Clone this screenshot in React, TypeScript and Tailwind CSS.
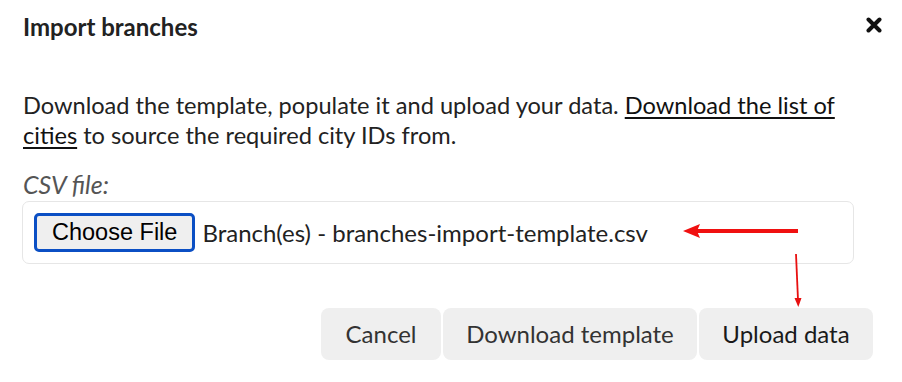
import React from 'react';

export default function App() {
  return (
    <div className="relative w-[902px] h-[382px] bg-white text-[#222] font-['Lato','Noto_Sans',sans-serif] pl-[23px] pr-[22px]">
      <div className="flex items-start justify-between pt-[12px]">
        <h1 className="text-[24px] leading-[30px] font-bold">Import branches</h1>
        <button className="mt-[5px] -mr-[2px] w-[16px] h-[16px] flex items-center justify-center">
          <svg width="16" height="16" viewBox="0 0 16 16">
            <path d="M2.5 2.5 L13.5 13.5 M13.5 2.5 L2.5 13.5" stroke="#111" strokeWidth="4" strokeLinecap="round" />
          </svg>
        </button>
      </div>

      <p className="mt-[48px] text-[23.6px] leading-[30px] pr-[10px]">
        Download the template, populate it and upload your data.{' '}
        <a className="underline underline-offset-[3px] decoration-[1.5px] text-[#111]" href="#">Download the list of cities</a>{' '}
        to source the required city IDs from.
      </p>

      <div className="mt-[19px] italic text-[25px] leading-[30px] text-[#555]">CSV file:</div>

      <div className="mt-[2px] -ml-[1px] mr-[26px] h-[63px] border border-[#e6e6e6] rounded-[7px] flex items-center pl-[11px]">
        <span className="h-[39px] px-[15px] flex items-center bg-[#efefef] border-[3px] border-[#0b4fc4] rounded-[5px] font-['Liberation_Sans',Arial,sans-serif] text-[23.5px] text-black">
          Choose File
        </span>
        <span className="ml-[7px] text-[24px]">Branch(es) - branches-import-template.csv</span>
      </div>

      <div className="mt-[44px] flex justify-end gap-[2px] pr-[7px]">
        <button className="h-[52px] w-[120px] rounded-[8px] bg-[#efefef] text-[24px] text-[#333]">Cancel</button>
        <button className="h-[52px] w-[254px] rounded-[8px] bg-[#efefef] text-[24px] text-[#333]">Download template</button>
        <button className="h-[52px] w-[174px] rounded-[8px] bg-[#efefef] text-[24px] text-[#1a1a1a]">Upload data</button>
      </div>

      <svg className="absolute left-0 top-0 pointer-events-none" width="902" height="382">
        <line x1="798" y1="231" x2="696" y2="231" stroke="#f01010" strokeWidth="4" />
        <polygon points="683,231 700,224 697,231 700,238" fill="#f01010" />
        <line x1="796" y1="254" x2="798" y2="300" stroke="#e81010" strokeWidth="1.8" />
        <polygon points="798.3,307 794.5,298 801.5,298" fill="#e81010" />
      </svg>
    </div>
  );
}
